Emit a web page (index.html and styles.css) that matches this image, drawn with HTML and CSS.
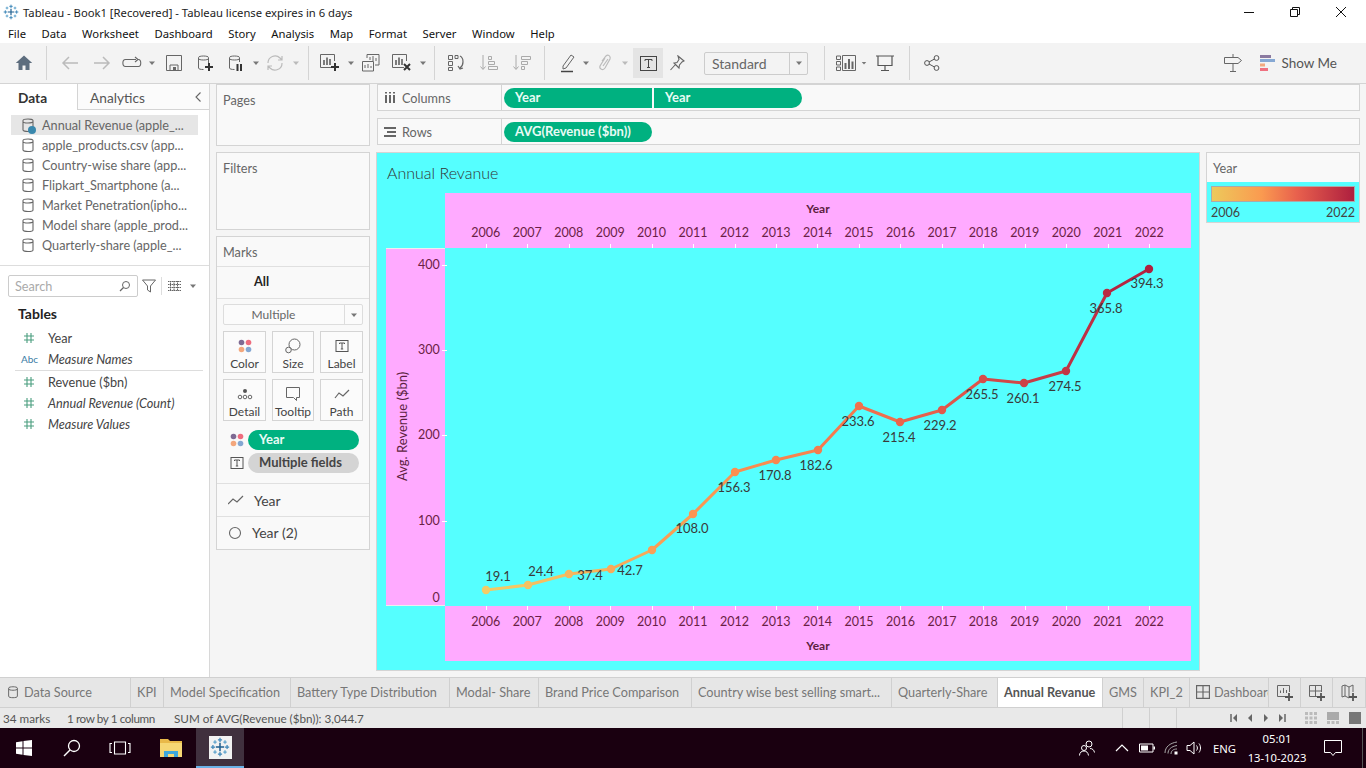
FILE: index.html
```html
<!DOCTYPE html>
<html lang="en">
  <head>
    <meta charset="UTF-8" />
    <title>Tableau - Book1 [Recovered] - Tableau license expires in 6 days</title>
    <link rel="stylesheet" href="styles.css">
  </head>
  <body>
    <!-- Shared icons -->
    <svg class="defs" width="0" height="0">
      <symbol id="i-logo" viewBox="0 0 24 24">
        <g fill="none" stroke-width="1.500">
          <path d="M12 7v10M7 12h10" stroke="#1f5f8f" stroke-width="1.800"/>
          <path d="M12 1v5M9.500 3.500h5M12 18v5M9.500 20.500h5M1 12h5M3.500 9.500v5M18 12h5M20.500 9.500v5" stroke="#3f87b8"/>
          <path d="M6 4v4M4 6h4M18 4v4M16 6h4M6 16v4M4 18h4M18 16v4M16 18h4" stroke="#5fa3cc"/>
        </g>
      </symbol>
      <symbol id="i-cyl" viewBox="0 0 16 16">
        <path d="M3 3.500C3 1.500 13 1.500 13 3.500V13C13 15 3 15 3 13ZM3 4.500C3 6.500 13 6.500 13 4.500" fill="none" stroke="#666" stroke-width="1.100"/>
      </symbol>
      <symbol id="i-hash" viewBox="0 0 12 12">
        <path d="M4 1v10M8 1v10M1 4h10M1 8h10" stroke="#4a9d7f" stroke-width="1.100"/>
      </symbol>
      <symbol id="i-dots" viewBox="0 0 14 14">
        <circle cx="3.500" cy="3.500" r="2.800" fill="#7f6a93"/>
        <circle cx="10.500" cy="3.500" r="2.800" fill="#ee6c7e"/>
        <circle cx="3.500" cy="10.500" r="2.800" fill="#f3a77d"/>
        <circle cx="10.500" cy="10.500" r="2.800" fill="#84a7d2"/>
      </symbol>
      <symbol id="i-tbox" viewBox="0 0 14 14">
        <rect x="1" y="1.500" width="12" height="11" fill="none" stroke="#555"/>
        <path d="M4.500 5V4h5v1M7 4v6M5.800 10h2.400" fill="none" stroke="#555"/>
      </symbol>
      <symbol id="i-caret" viewBox="0 0 8 8">
        <path d="M1 2.500h6L4 6Z" fill="#777"/>
      </symbol>
    </svg>

    <header class="titlebar">
      <svg class="app-logo"><use href="#i-logo"/></svg>
      <span class="app-title">Tableau - Book1 [Recovered] - Tableau license expires in 6 days</span>
      <div class="win-btns">
        <svg viewBox="0 0 12 12"><path d="M1 6.500h10" stroke="#111"/></svg>
        <svg viewBox="0 0 12 12"><path d="M1.500 3.500h7v7h-7zM3.500 3.500v-2h7v7h-2" fill="none" stroke="#111"/></svg>
        <svg viewBox="0 0 12 12"><path d="M1 1l10 10M11 1L1 11" stroke="#111"/></svg>
      </div>
    </header>

    <nav class="menubar">
      <span>File</span><span>Data</span><span>Worksheet</span><span>Dashboard</span><span>Story</span><span>Analysis</span><span>Map</span><span>Format</span><span>Server</span><span>Window</span><span>Help</span>
    </nav>

    <div class="toolbar">
      <div class="tool w32"><svg viewBox="0 0 18 18" width="18" height="18"><path d="M9 1.500L0.800 9H3.500v7h4v-4.500h3V16h4V9h2.700Z" fill="#5d6d7e"/></svg></div>
      <i class="sep m67"></i>
      <div class="tool w32"><svg viewBox="0 0 18 18" width="18" height="18"><path d="M17 9H2M8 3L2 9l6 6" fill="none" stroke="#bbb" stroke-width="1.500"/></svg></div>
      <div class="tool w32"><svg viewBox="0 0 18 18" width="18" height="18"><path d="M1 9h15M10 3l6 6-6 6" fill="none" stroke="#bbb" stroke-width="1.500"/></svg></div>
      <div class="tool w27"><svg viewBox="0 0 20 14" width="20" height="14"><path d="M14 3.500H3.500C0 3.500 0 10.500 3.500 10.500h13c3 0 3-7 0-7M13 1l3 2.500-3 2.500" fill="none" stroke="#666" stroke-width="1.100"/></svg></div>
      <div class="tool w14"><svg class="caret"><use href="#i-caret"/></svg></div>
      <div class="tool w30"><svg viewBox="0 0 16 16" width="16" height="16"><path d="M.5.500h15v15H.500ZM4 15.500V10h8v5.500" fill="none" stroke="#666"/><rect x="7" y="12" width="3" height="3" fill="#666"/></svg></div>
      <div class="tool w32"><svg viewBox="0 0 16 18" width="16" height="18"><path d="M1.500 3.500C1.500 1.500 11.500 1.500 11.500 3.500V9M1.500 3.500V14c0 1 2 1.500 5 1.500M1.500 4.500c0 2 10 2 10 0" fill="none" stroke="#666"/><path d="M12 9v8M8 13h8" stroke="#333" stroke-width="2"/></svg></div>
      <div class="tool w30"><svg viewBox="0 0 16 18" width="16" height="18"><path d="M1.500 3.500C1.500 1.500 11.500 1.500 11.500 3.500V8M1.500 3.500V14c0 1 2 1.500 5 1.500M1.500 4.500c0 2 10 2 10 0" fill="none" stroke="#666"/><path d="M9.500 10v7M13 10v7" stroke="#333" stroke-width="2"/></svg></div>
      <div class="tool w10"><svg class="caret"><use href="#i-caret"/></svg></div>
      <div class="tool w28"><svg viewBox="0 0 18 18" width="18" height="18"><path d="M2 9a7 7 0 0 1 12-5l2 2M16 9a7 7 0 0 1-12 5l-2-2M16 2v4h-4M2 16v-4h4" fill="none" stroke="#bbb" stroke-width="1.200"/></svg></div>
      <div class="tool w14"><svg class="caret faint"><use href="#i-caret"/></svg></div>
      <i class="sep m5"></i>
      <div class="tool w32"><svg viewBox="0 0 20 18" width="20" height="18"><path d="M13 13.500H.500V.500h14V7" fill="none" stroke="#666"/><path d="M4 6v5M7 3.500V11M10 5v6" stroke="#555" stroke-width="1.500"/><path d="M15 9v8M11 13h8" stroke="#333" stroke-width="2"/></svg></div>
      <div class="tool w10"><svg class="caret"><use href="#i-caret"/></svg></div>
      <div class="tool w30"><svg viewBox="0 0 18 18" width="18" height="18"><path d="M5 4V.500h12V11h-4M.500 7.500h11V17H.500Z" fill="#f3f3f3" stroke="#666"/><path d="M8 6V3M11 7V2M14 7V4M3 14v-3M6 14v-4M9 14v-2" stroke="#666"/></svg></div>
      <div class="tool w32"><svg viewBox="0 0 20 18" width="20" height="18"><path d="M12 13.500H.500V.500h14V7" fill="none" stroke="#666"/><path d="M4 6v5M7 3.500V11M10 5v6" stroke="#555" stroke-width="1.500"/><path d="M12 10l6 6M18 10l-6 6" stroke="#333" stroke-width="2"/></svg></div>
      <div class="tool w10"><svg class="caret"><use href="#i-caret"/></svg></div>
      <i class="sep m6"></i>
      <div class="tool w30"><svg viewBox="0 0 18 18" width="18" height="18"><path d="M1.500 1.500h4v4h-4ZM1.500 7.500h4v4h-4ZM1.500 13.500h4v3h-4ZM8 1.500h3v3H8Z" fill="none" stroke="#666"/><path d="M13 2c4 2 4 9 0 12M11 12l2 3 3-1" fill="none" stroke="#666" stroke-width="1.200"/></svg></div>
      <div class="tool w36"><svg viewBox="0 0 18 18" width="18" height="18"><path d="M3 1v14M.500 12.500L3 15.500l2.500-3" fill="none" stroke="#aaa"/><path d="M8.500 2.500h3v3h-3ZM8.500 7.500h6v3h-6ZM8.500 12.500h9v3h-9Z" fill="none" stroke="#aaa"/></svg></div>
      <div class="tool w30"><svg viewBox="0 0 18 18" width="18" height="18"><path d="M3 1v14M.500 12.500L3 15.500l2.500-3" fill="none" stroke="#aaa"/><path d="M8.500 2.500h9v3h-9ZM8.500 7.500h6v3h-6ZM8.500 12.500h3v3h-3Z" fill="none" stroke="#aaa"/></svg></div>
      <i class="sep m7"></i>
      <div class="tool w28 ml2"><svg viewBox="0 0 16 20" width="16" height="20"><path d="M3 13L11 2l3 2-8 11-3 1Z" fill="none" stroke="#666"/><path d="M1 18.500h12" stroke="#444" stroke-width="1.500"/></svg></div>
      <div class="tool w8"><svg class="caret"><use href="#i-caret"/></svg></div>
      <div class="tool w30"><svg viewBox="0 0 14 20" width="14" height="20"><path d="M4 8l4-5c2-2 5 0 4 3L7 15c-2 3-6 1-5-2l5-8M5 13l5-7" fill="none" stroke="#bbb" stroke-width="1.200"/></svg></div>
      <div class="tool w10"><svg class="caret faint"><use href="#i-caret"/></svg></div>
      <div class="tool w30 tool-on"><svg width="17" height="15" viewBox="0 0 17 15"><rect x=".5" y=".5" width="16" height="14" fill="none" stroke="#444"/><path d="M5 5V3.500h7V5M8.500 3.500v8M7 11.500h3" fill="none" stroke="#444"/></svg></div>
      <div class="tool w28"><svg viewBox="0 0 16 16" width="16" height="16"><path d="M9 1l6 5-2 1-2.500 3-.5 3-5-5 3-.500 2-3ZM6 10l-4.500 5" fill="none" stroke="#666" stroke-width="1.100"/></svg></div>
      <div class="fit-select"><span>Standard</span><b><svg class="caret"><use href="#i-caret"/></svg></b></div>
      <i class="sep m16"></i>
      <div class="tool w30"><svg viewBox="0 0 20 16" width="20" height="16"><path d="M.500 1h4v3.500h-4ZM.500 6.500h4V10h-4ZM.500 12h4v3.500h-4ZM6.500.500h13v15h-13Z" fill="none" stroke="#666"/><path d="M9.500 8v6M13 4v10M16.500 6.500V14" stroke="#666" stroke-width="2"/></svg></div>
      <div class="tool w6"><svg class="caret"><use href="#i-caret"/></svg></div>
      <div class="tool w36"><svg viewBox="0 0 18 18" width="18" height="18"><path d="M0 2h18M2 2.500v9h14v-9M9 11.500v5M5 16.500h8" fill="none" stroke="#555" stroke-width="1.200"/></svg></div>
      <i class="sep m6"></i>
      <div class="tool w32"><svg viewBox="0 0 16 16" width="16" height="16"><circle cx="3" cy="8" r="2.400" fill="none" stroke="#555"/><circle cx="12.500" cy="3" r="2.400" fill="none" stroke="#555"/><circle cx="12.500" cy="13" r="2.400" fill="none" stroke="#555"/><path d="M5 7l5.500-3M5 9l5.500 3" stroke="#555"/></svg></div>
      <div class="tb-space"></div>
      <div class="tool w32"><svg viewBox="0 0 18 18" width="18" height="18"><path d="M9 0v3M.500 3.500H14l3.500 3-3.500 3H.500ZM9 9.500V17M6 17.500h6" fill="none" stroke="#666"/></svg></div>
      <div class="showme">
        <svg viewBox="0 0 15 16" width="15" height="16"><rect y="0" width="11" height="3" fill="#8b7aa0"/><rect y="4" width="15" height="3" fill="#86a8d3"/><rect y="8.500" width="5" height="3" fill="#f2a97f"/><rect y="13" width="8" height="3" fill="#ef7180"/></svg>
        <span>Show Me</span>
      </div>
    </div>

    <main class="workspace">
      <aside class="side">
        <div class="side-tabs">
          <div class="side-tab side-tab-on">Data</div>
          <div class="side-tab">Analytics<svg viewBox="0 0 8 12" width="8" height="12"><path d="M6.500 1.500L2 6l4.500 4.500" fill="none" stroke="#666" stroke-width="1.100"/></svg></div>
        </div>
        <ul class="sources">
          <li class="source source-on"><svg><use href="#i-cyl"/></svg><span class="check"></span>Annual Revenue (apple_...</li>
          <li class="source"><svg><use href="#i-cyl"/></svg>apple_products.csv (app...</li>
          <li class="source"><svg><use href="#i-cyl"/></svg>Country-wise share (app...</li>
          <li class="source"><svg><use href="#i-cyl"/></svg>Flipkart_Smartphone (a...</li>
          <li class="source"><svg><use href="#i-cyl"/></svg>Market Penetration(ipho...</li>
          <li class="source"><svg><use href="#i-cyl"/></svg>Model share (apple_prod...</li>
          <li class="source"><svg><use href="#i-cyl"/></svg>Quarterly-share (apple_...</li>
        </ul>
        <div class="field-tools">
          <div class="search">Search<svg viewBox="0 0 12 12" width="12" height="12"><circle cx="7" cy="5" r="3.500" fill="none" stroke="#666"/><path d="M4.500 7.500L1 11" stroke="#666" stroke-width="1.200"/></svg></div>
          <svg class="funnel" viewBox="0 0 14 14" width="14" height="14"><path d="M.500 1h13L8.500 7v6l-3-2V7Z" fill="none" stroke="#666"/></svg>
          <i class="tool-sep"></i>
          <svg viewBox="0 0 13 10" width="13" height="10"><path d="M0 .500h13M0 3.500h13M0 6.500h13M0 9.500h13M2.500 0v10M6 0v10M9.500 0v10" stroke="#666" stroke-dasharray="1.500 .5"/></svg>
          <svg class="caret list-caret"><use href="#i-caret"/></svg>
        </div>
        <h2 class="tables">Tables</h2>
        <ul class="fields">
          <li class="field"><svg class="hash"><use href="#i-hash"/></svg>Year</li>
          <li class="field field-calc"><span class="abc">Abc</span>Measure Names</li>
        </ul>
        <ul class="fields fields-measures">
          <li class="field"><svg class="hash"><use href="#i-hash"/></svg>Revenue ($bn)</li>
          <li class="field field-calc"><svg class="hash"><use href="#i-hash"/></svg>Annual Revenue (Count)</li>
          <li class="field field-calc"><svg class="hash"><use href="#i-hash"/></svg>Measure Values</li>
        </ul>
      </aside>

      <section class="cards">
        <div class="card card-pages"><div class="card-title">Pages</div></div>
        <div class="card card-filters"><div class="card-title">Filters</div></div>
        <div class="card card-marks">
          <div class="card-title marks-title">Marks</div>
          <div class="marks-all">All</div>
          <div class="marks-body">
            <div class="mark-select"><span>Multiple</span><b><svg class="caret"><use href="#i-caret"/></svg></b></div>
            <div class="mark-grid">
              <div class="mark-btn"><svg viewBox="0 0 14 14" width="14" height="14"><use href="#i-dots"/></svg>Color</div>
              <div class="mark-btn"><svg viewBox="0 0 16 16" width="16" height="16"><circle cx="9.500" cy="6.500" r="5.500" fill="none" stroke="#666"/><circle cx="3.500" cy="12" r="2.800" fill="#f6f6f6" stroke="#666"/></svg>Size</div>
              <div class="mark-btn"><svg viewBox="0 0 14 14" width="14" height="14"><use href="#i-tbox"/></svg>Label</div>
              <div class="mark-btn"><svg viewBox="0 0 16 16" width="16" height="16"><circle cx="8" cy="5" r="2" fill="#555"/><circle cx="3" cy="11" r="1.800" fill="none" stroke="#666"/><circle cx="8" cy="11" r="1.800" fill="none" stroke="#666"/><circle cx="13" cy="11" r="1.800" fill="none" stroke="#666"/></svg>Detail</div>
              <div class="mark-btn"><svg viewBox="0 0 16 16" width="16" height="16"><path d="M1.500 1.500h13v10h-3v3l-3-3h-7Z" fill="none" stroke="#666"/></svg>Tooltip</div>
              <div class="mark-btn"><svg viewBox="0 0 16 16" width="16" height="16"><path d="M1 12l4-5 4 3 6-6" fill="none" stroke="#666" stroke-width="1.200"/></svg>Path</div>
            </div>
            <div class="mark-pill"><svg viewBox="0 0 14 14" width="14" height="14"><use href="#i-dots"/></svg><span class="pill pill-green">Year</span></div>
            <div class="mark-pill"><svg viewBox="0 0 14 14" width="14" height="14"><use href="#i-tbox"/></svg><span class="pill pill-grey">Multiple fields</span></div>
          </div>
          <div class="mark-row"><svg viewBox="0 0 16 12" width="16" height="12"><path d="M0 10l5-5 4 3 6-6" fill="none" stroke="#666" stroke-width="1.200"/></svg>Year</div>
          <div class="mark-row"><svg viewBox="0 0 14 14" width="14" height="14"><circle cx="7" cy="7" r="5.500" fill="none" stroke="#666" stroke-width="1.100"/></svg>Year (2)</div>
        </div>
      </section>

      <section class="stage">
        <div class="shelf">
          <div class="shelf-label"><svg viewBox="0 0 12 12" width="12" height="12"><path d="M2 3v8M6 3v8M10 3v8M2 0v1.500M6 0v1.500M10 0v1.500" stroke="#666" stroke-width="2"/></svg>Columns</div>
          <div class="shelf-pills"><span class="pill pill-green pill-first">Year</span><span class="pill pill-green pill-last">Year</span></div>
        </div>
        <div class="shelf">
          <div class="shelf-label"><svg viewBox="0 0 12 12" width="12" height="12"><path d="M0 2h12M3 6h9M0 10h12" stroke="#666" stroke-width="2"/></svg>Rows</div>
          <div class="shelf-pills"><span class="pill pill-green pill-avg">AVG(Revenue ($bn))</span></div>
        </div>

        <div class="view">
          <div class="viz">
            <div class="viz-title">Annual Revanue</div>
            <div class="viz-grid">
              <div></div>
              <div class="xhead xhead-top">
                <div class="xtitle">Year</div>
                <div class="years years-top">
                  <span>2006</span><span>2007</span><span>2008</span><span>2009</span><span>2010</span><span>2011</span><span>2012</span><span>2013</span><span>2014</span><span>2015</span><span>2016</span><span>2017</span><span>2018</span><span>2019</span><span>2020</span><span>2021</span><span>2022</span>
                </div>
              </div>
              <div class="yaxis">
                <div class="ytitle">Avg. Revenue ($bn)</div>
                <div class="yticks">
                  <span class="ytick">400</span>
                  <span class="ytick">300</span>
                  <span class="ytick">200</span>
                  <span class="ytick">100</span>
                  <span class="ytick ytick-zero">0</span>
                </div>
              </div>
              <div class="plot">
                <svg viewBox="445 248 746 358" width="746" height="358">
                  <g stroke-width="3" stroke-linecap="round">
                    <line x1="486" y1="590" x2="528" y2="585" stroke="#f4c864"/>
                    <line x1="528" y1="585" x2="569" y2="574" stroke="#f5bf61"/>
                    <line x1="569" y1="574" x2="611" y2="569" stroke="#f6b45d"/>
                    <line x1="611" y1="569" x2="652" y2="550" stroke="#f8a958"/>
                    <line x1="652" y1="550" x2="693" y2="514" stroke="#f99e55"/>
                    <line x1="693" y1="514" x2="735" y2="472" stroke="#fa9552"/>
                    <line x1="735" y1="472" x2="776" y2="460" stroke="#f98c50"/>
                    <line x1="776" y1="460" x2="818" y2="450" stroke="#f7834f"/>
                    <line x1="818" y1="450" x2="859" y2="406" stroke="#f4794e"/>
                    <line x1="859" y1="406" x2="900" y2="422" stroke="#ee6e4d"/>
                    <line x1="900" y1="422" x2="942" y2="410" stroke="#e6614c"/>
                    <line x1="942" y1="410" x2="983" y2="379" stroke="#de554a"/>
                    <line x1="983" y1="379" x2="1024" y2="383" stroke="#d24848"/>
                    <line x1="1024" y1="383" x2="1066" y2="371" stroke="#c73c46"/>
                    <line x1="1066" y1="371" x2="1107" y2="293" stroke="#bd3044"/>
                    <line x1="1107" y1="293" x2="1149" y2="269" stroke="#b42541"/>
                  </g>
                  <g>
                    <circle cx="486" cy="590" r="4.200" fill="#f4cc66"/>
                    <circle cx="528" cy="585" r="4.200" fill="#f5c263"/>
                    <circle cx="569" cy="574" r="4.200" fill="#f6b75f"/>
                    <circle cx="611" cy="569" r="4.200" fill="#f8ab5b"/>
                    <circle cx="652" cy="550" r="4.200" fill="#f9a056"/>
                    <circle cx="693" cy="514" r="4.200" fill="#fa9553"/>
                    <circle cx="735" cy="472" r="4.200" fill="#fa8f50"/>
                    <circle cx="776" cy="460" r="4.200" fill="#f8864f"/>
                    <circle cx="818" cy="450" r="4.200" fill="#f57c4e"/>
                    <circle cx="859" cy="406" r="4.200" fill="#f0704d"/>
                    <circle cx="900" cy="422" r="4.200" fill="#ea644c"/>
                    <circle cx="942" cy="410" r="4.200" fill="#e2584b"/>
                    <circle cx="983" cy="379" r="4.200" fill="#d84c49"/>
                    <circle cx="1024" cy="383" r="4.200" fill="#cc4047"/>
                    <circle cx="1066" cy="371" r="4.200" fill="#c23545"/>
                    <circle cx="1107" cy="293" r="4.200" fill="#b92a42"/>
                    <circle cx="1149" cy="269" r="4.200" fill="#b01f3f"/>
                  </g>
                  <g class="labels">
                    <text x="498" y="576">19.1</text>
                    <text x="541" y="571">24.4</text>
                    <text x="590" y="575">37.4</text>
                    <text x="630" y="570">42.7</text>
                    <text x="692" y="528">108.0</text>
                    <text x="734" y="487">156.3</text>
                    <text x="775" y="475">170.8</text>
                    <text x="816" y="465">182.6</text>
                    <text x="858" y="421">233.6</text>
                    <text x="899" y="437">215.4</text>
                    <text x="940" y="425">229.2</text>
                    <text x="982" y="394">265.5</text>
                    <text x="1023" y="398">260.1</text>
                    <text x="1065" y="386">274.5</text>
                    <text x="1106" y="308">365.8</text>
                    <text x="1147" y="283">394.3</text>
                  </g>
                </svg>
              </div>
              <div></div>
              <div class="xhead xhead-bottom">
                <div class="years years-bottom">
                  <span>2006</span><span>2007</span><span>2008</span><span>2009</span><span>2010</span><span>2011</span><span>2012</span><span>2013</span><span>2014</span><span>2015</span><span>2016</span><span>2017</span><span>2018</span><span>2019</span><span>2020</span><span>2021</span><span>2022</span>
                </div>
                <div class="xtitle">Year</div>
              </div>
            </div>
          </div>
          <div class="legend">
            <div class="legend-title">Year</div>
            <div class="legend-body">
              <div class="legend-ramp"></div>
              <div class="legend-ends"><span>2006</span><span>2022</span></div>
            </div>
          </div>
        </div>
      </section>
    </main>

    <div class="tabs">
      <div class="tab"><svg><use href="#i-cyl"/></svg>Data Source</div>
      <div class="tab">KPI</div>
      <div class="tab">Model Specification</div>
      <div class="tab">Battery Type Distribution</div>
      <div class="tab">Modal- Share</div>
      <div class="tab">Brand Price Comparison</div>
      <div class="tab">Country wise best selling smart...</div>
      <div class="tab">Quarterly-Share</div>
      <div class="tab tab-on">Annual Revanue</div>
      <div class="tab">GMS</div>
      <div class="tab">KPI_2</div>
      <div class="tab tab-cut"><svg viewBox="0 0 12 12" width="12" height="12"><path d="M.5.500h11v11H.500ZM6 .5v11M.5 6h11" fill="none" stroke="#666"/></svg>Dashboard</div>
      <div class="tab tab-add"><svg viewBox="0 0 18 18" width="18" height="18"><path d="M10 12.500H1.500v-11h12V8M4.500 9V6.500M7.500 9V4M10.500 9V6" fill="none" stroke="#666"/><path d="M13 9v8M9 13h8" stroke="#555" stroke-width="1.800"/></svg></div>
      <div class="tab tab-add"><svg viewBox="0 0 18 18" width="18" height="18"><path d="M10 12.500H1.500v-11h12V8M7.500 1.500v11M1.500 7h12" fill="none" stroke="#666"/><path d="M13 9v8M9 13h8" stroke="#555" stroke-width="1.800"/></svg></div>
      <div class="tab tab-add"><svg viewBox="0 0 18 18" width="18" height="18"><path d="M9 14l-4-2-3 1V2l3-1 4 2 4-2v7M5 1v11M9 3v11" fill="none" stroke="#666"/><path d="M13 9v8M9 13h8" stroke="#555" stroke-width="1.800"/></svg></div>
    </div>

    <div class="statusbar">
      <span class="st-marks">34 marks</span>
      <span class="st-size">1 row by 1 column</span>
      <span>SUM of AVG(Revenue ($bn)): 3,044.7</span>
      <div class="st-cells"><i></i><i></i><i></i></div>
      <div class="st-nav">
        <svg viewBox="0 0 8 10" width="8" height="10"><path d="M1 1v8" stroke="#666" stroke-width="1.500"/><path d="M7 1v8L3 5Z" fill="#666"/></svg>
        <svg viewBox="0 0 8 10" width="8" height="10"><path d="M6 1v8L2 5Z" fill="#666"/></svg>
        <svg viewBox="0 0 8 10" width="8" height="10"><path d="M2 1v8l4-4Z" fill="#666"/></svg>
        <svg viewBox="0 0 8 10" width="8" height="10"><path d="M7 1v8" stroke="#666" stroke-width="1.500"/><path d="M1 1v8l4-4Z" fill="#666"/></svg>
      </div>
      <div class="st-views">
        <svg viewBox="0 0 12 12" width="12" height="12"><path d="M0 1.500h12M0 6h12M0 10.500h12" stroke="#bbb" stroke-width="3" stroke-dasharray="3 1.500"/></svg>
        <svg viewBox="0 0 12 12" width="12" height="12"><path d="M0 4h12" stroke="#aaa" stroke-width="8"/><path d="M0 10.500h12" stroke="#bbb" stroke-width="3" stroke-dasharray="3 1.500"/></svg>
        <svg viewBox="0 0 12 12" width="12" height="12"><rect width="12" height="12" fill="#777"/></svg>
      </div>
    </div>

    <footer class="taskbar">
      <div class="task"><svg viewBox="0 0 16 16" width="16" height="16"><path d="M0 2.300l6.500-1v6.200H0ZM7.500 1.100L16 0v7.500H7.500ZM0 8.500h6.500v6.200l-6.500-1ZM7.500 8.500H16V16l-8.500-1.100Z" fill="#fff"/></svg></div>
      <div class="task"><svg viewBox="0 0 18 18" width="18" height="18"><circle cx="11" cy="7" r="5.500" fill="none" stroke="#fff" stroke-width="1.300"/><path d="M7 11l-6 6" stroke="#fff" stroke-width="1.500"/></svg></div>
      <div class="task"><svg viewBox="0 0 22 14" width="22" height="14"><path d="M5.500 1h11v12h-11ZM3 2.500H1v9h2M19 2.500h2v9h-2" fill="none" stroke="#fff" stroke-width="1.100"/></svg></div>
      <div class="task task-folder"><svg viewBox="0 0 22 18" width="22" height="18"><path d="M0 0h8l2 2h12v3H0Z" fill="#e9b949"/><rect y="4" width="22" height="14" fill="#f6d774"/><rect x="4" y="12" width="14" height="6" fill="#3fa7dc"/><rect x="8" y="15" width="6" height="3" fill="#f6d774"/></svg></div>
      <div class="task task-on"><span class="task-tile"><svg viewBox="0 0 24 24" width="20" height="20"><use href="#i-logo"/></svg></span></div>
      <div class="tray">
        <svg viewBox="0 0 18 18" width="18" height="18"><circle cx="11" cy="5" r="3" fill="none" stroke="#fff"/><circle cx="6" cy="9" r="2.500" fill="none" stroke="#fff"/><path d="M1.500 16.500c0-3 2-4.500 4.500-4.500s4 1.500 4.500 4.500M12 9.500c2.500 0 4 1.500 4.500 4" fill="none" stroke="#fff"/></svg>
        <svg class="tray-up" viewBox="0 0 14 8" width="14" height="8"><path d="M1 7l6-6 6 6" fill="none" stroke="#fff" stroke-width="1.200"/></svg>
        <svg class="tray-batt" viewBox="0 0 16 10" width="16" height="10"><path d="M.5 1h13.500v8H.500Z" fill="none" stroke="#fff"/><rect x="2" y="2.500" width="7" height="5" fill="#fff"/><rect x="14.500" y="3.500" width="1.500" height="3" fill="#fff"/></svg>
        <svg class="tray-wifi" viewBox="0 0 14 14" width="14" height="14"><path d="M1 12C1 6 6 2 13 1M4 12.500c0-4 3-7 9-8M7 13c0-3 2-5 6-5" fill="none" stroke="#aaa"/><rect x="10.500" y="10.500" width="3" height="3" fill="#fff"/></svg>
        <svg class="tray-vol" viewBox="0 0 17 14" width="17" height="14"><path d="M1 4.500h3L8 1v12L4 9.500H1Z" fill="none" stroke="#fff"/><path d="M10.500 4.500c1.200 1.500 1.200 3.500 0 5M13 2.500c2 2.500 2 6.500 0 9" fill="none" stroke="#fff"/></svg>
        <span class="tray-lang">ENG</span>
        <div class="clock"><span>05:01</span><span>13-10-2023</span></div>
        <svg class="tray-note" viewBox="0 0 18 16" width="18" height="16"><path d="M.5.500h17v12h-6l-2.500 3-2.500-3h-6Z" fill="none" stroke="#fff"/></svg>
      </div>
    </footer>
  </body>
</html>
```

FILE: styles.css
```css
/* Reset */
* {
  box-sizing: border-box;
  margin: 0;
  padding: 0;
}
:root {
  --ui-font: "Lato", "Open Sans", sans-serif;
  --win-font: "Noto Sans", "Open Sans", sans-serif;
  --line: #d4d4d4;
  --panel: #f9f9f9;
  --green: #00b180;
  --cyan: #55ffff;
  --pink: #ffaaff;
}
body {
  width: 1366px;
  height: 768px;
  overflow: hidden;
  display: flex;
  flex-direction: column;
  background: #f5f5f5;
  font-family: var(--ui-font);
  font-size: 12.7px;
  color: #555;
}
ul {
  list-style: none;
}
.defs {
  position: absolute;
}
.caret {
  width: 8px;
  height: 8px;
}
.caret.faint {
  opacity: 0.45;
}

/* Title & menu */
.titlebar {
  height: 24px;
  flex: none;
  display: flex;
  align-items: center;
  background: #fff;
  font-family: var(--win-font);
  font-size: 11.25px;
  color: #222;
}
.app-logo {
  width: 16px;
  height: 16px;
  margin: 0 4px 0 3px;
}
.app-title {
  flex: 1;
}
.win-btns {
  display: flex;
  gap: 34px;
  margin-right: 19px;
}
.win-btns svg {
  width: 12px;
  height: 12px;
}
.menubar {
  height: 19px;
  flex: none;
  display: flex;
  align-items: center;
  gap: 15.6px;
  padding-left: 8px;
  background: #fff;
  font-family: var(--win-font);
  font-size: 11.25px;
  color: #111;
}

/* Toolbar */
.toolbar {
  height: 41px;
  flex: none;
  display: flex;
  align-items: center;
  padding-left: 8px;
  background: #f3f3f3;
  border-bottom: 1px solid var(--line);
}
.tool {
  height: 30px;
  flex: none;
  display: flex;
  align-items: center;
  justify-content: center;
}
.tool-on {
  background: #e4e4e4;
  margin-left: 3px;
}
.w6 { width: 6px; }
.w8 { width: 8px; }
.w10 { width: 10px; }
.w14 { width: 14px; }
.w27 { width: 27px; }
.w28 { width: 28px; }
.w30 { width: 30px; }
.w32 { width: 32px; }
.w36 { width: 36px; }
.ml2 { margin-left: 2px; }
.sep {
  width: 1px;
  height: 34px;
  flex: none;
  background: #d4d4d4;
}
.m5 { margin: 0 5px; }
.m6 { margin: 0 6px; }
.m67 { margin: 0 7px 0 6px; }
.m7 { margin: 0 7px; }
.m16 { margin: 0 6px 0 16px; }
.fit-select {
  width: 104px;
  height: 23px;
  flex: none;
  margin-left: 13px;
  display: flex;
  align-items: center;
  border: 1px solid #ccc;
  border-radius: 2px;
  font-size: 14px;
  color: #666;
}
.fit-select span {
  flex: 1;
  padding-left: 7px;
}
.fit-select b {
  width: 18px;
  height: 21px;
  display: flex;
  align-items: center;
  justify-content: center;
  border-left: 1px solid #ccc;
}
.tb-space {
  flex: 1;
}
.showme {
  display: flex;
  align-items: center;
  gap: 6px;
  margin: 0 29px 0 11px;
  font-size: 13.5px;
  color: #555;
}

/* Main area */
.workspace {
  height: 593px;
  flex: none;
  display: flex;
}
.side {
  width: 210px;
  flex: none;
  background: #fff;
  border-right: 1px solid #d8d8d8;
}
.side-tabs {
  height: 26px;
  display: flex;
}
.side-tab {
  width: 77px;
  padding: 5px 0 0 18px;
  font-size: 13.7px;
  font-weight: 700;
  color: #333;
}
.side-tab:last-child {
  flex: 1;
  display: flex;
  justify-content: space-between;
  padding: 5px 7px 0 12px;
  font-weight: 400;
  color: #555;
  background: #fbfbfb;
  border-left: 1px solid var(--line);
  border-bottom: 1px solid var(--line);
}
.side-tab svg {
  margin-top: 2px;
}
.sources {
  height: 156px;
  padding-top: 5px;
  border-bottom: 1px solid #ddd;
}
.source {
  position: relative;
  height: 20px;
  margin: 0 11px;
  padding-left: 31px;
  line-height: 20px;
  color: #666;
  white-space: nowrap;
}
.source svg {
  position: absolute;
  left: 9px;
  top: 2px;
  width: 16px;
  height: 16px;
}
.source-on {
  background: #e6e6e6;
}
.check {
  position: absolute;
  left: 17px;
  top: 11px;
  width: 8px;
  height: 8px;
  border-radius: 50%;
  background: #3a88ad;
}
.field-tools {
  display: flex;
  align-items: center;
  height: 22px;
  margin: 9px 0 0 8px;
}
.search {
  width: 130px;
  height: 22px;
  display: flex;
  align-items: center;
  justify-content: space-between;
  padding: 0 6px 0 6px;
  border: 1px solid #ccc;
  border-radius: 2px;
  color: #aaa;
}
.funnel {
  margin: 0 5px 0 4px;
}
.tool-sep {
  width: 1px;
  height: 18px;
  margin-right: 6px;
  background: #ddd;
}
.list-caret {
  margin-left: 8px;
}
.tables {
  margin: 9px 0 0 18px;
  font-size: 14px;
  line-height: 16px;
  color: #222;
}
.fields {
  margin: 5px 6px 0 15px;
  padding-bottom: 1px;
  border-bottom: 1px solid #ddd;
}
.fields-measures {
  margin-top: 0;
  border-bottom: none;
}
.field {
  height: 21px;
  display: flex;
  align-items: center;
  color: #444;
  white-space: nowrap;
}
.field-calc {
  font-style: italic;
}
.hash {
  width: 12px;
  height: 12px;
  margin: 0 13px 0 8px;
  flex: none;
}
.abc {
  width: 33px;
  padding-left: 6px;
  flex: none;
  font-size: 10px;
  font-style: normal;
  color: #3a7ca5;
}

/* Cards */
.cards {
  width: 154px;
  flex: none;
  margin: 0 7px 0 6px;
  display: flex;
  flex-direction: column;
  gap: 6px;
}
.card {
  background: var(--panel);
  border: 1px solid var(--line);
}
.card-title {
  padding: 7px 0 0 6px;
  color: #666;
}
.card-pages {
  height: 62px;
}
.card-filters {
  height: 78px;
}
.card-marks {
  height: 314px;
}
.marks-title {
  height: 30px;
  border-bottom: 1px solid #e0e0e0;
}
.marks-all {
  height: 32px;
  line-height: 29px;
  padding-left: 37px;
  font-weight: 700;
  color: #222;
  border-bottom: 1px solid #e0e0e0;
}
.marks-body {
  padding: 5px 6px 0;
  height: 185px;
  border-bottom: 1px solid #e0e0e0;
}
.mark-select {
  height: 21px;
  display: flex;
  align-items: center;
  background: #fbfbfb;
  border: 1px solid #ddd;
  border-radius: 2px;
  font-size: 12px;
  color: #666;
}
.mark-select span {
  flex: 1;
  padding-right: 21px;
  text-align: center;
}
.mark-select b {
  width: 18px;
  height: 19px;
  display: flex;
  align-items: center;
  justify-content: center;
  border-left: 1px solid #ddd;
}
.mark-grid {
  display: grid;
  grid-template-columns: 43px 42px 43px;
  grid-auto-rows: 42px;
  justify-content: space-between;
  row-gap: 6px;
  margin-top: 6px;
}
.mark-btn {
  display: flex;
  flex-direction: column;
  align-items: center;
  gap: 3px;
  padding-top: 6px;
  background: #fbfbfb;
  border: 1px solid var(--line);
  font-size: 12px;
  line-height: 14px;
  color: #444;
}
.mark-btn svg {
  height: 16px;
}
.mark-pill {
  display: flex;
  align-items: center;
  margin-top: 3px;
  gap: 4px;
}
.mark-grid + .mark-pill {
  margin-top: 9px;
}
.mark-pill svg {
  flex: none;
  margin-left: 7px;
}
.mark-pill .pill {
  flex: none;
  width: 111px;
}
.mark-row {
  height: 32px;
  display: flex;
  align-items: center;
  gap: 10px;
  padding-left: 11px;
  color: #444;
  font-size: 14px;
}
.mark-row + .mark-row {
  border-top: 1px solid #e0e0e0;
}

/* Pills */
.pill {
  height: 20px;
  padding-left: 11px;
  display: block;
  line-height: 19px;
  border-radius: 10px;
  font-size: 13px;
  font-weight: 700;
  white-space: nowrap;
}
.pill-green {
  background: var(--green);
  color: #e9fbf5;
}
.pill-grey {
  background: #d4d4d4;
  color: #444;
}
.pill-first {
  width: 148px;
  border-radius: 10px 0 0 10px;
}
.pill-last {
  width: 148px;
  margin-left: 2px;
  border-radius: 0 10px 10px 0;
}
.pill-avg {
  width: 148px;
}

/* Shelves */
.stage {
  width: 983px;
  flex: none;
  display: flex;
  flex-direction: column;
  gap: 7px;
}
.shelf {
  height: 27px;
  flex: none;
  display: flex;
  background: var(--panel);
  border: 1px solid var(--line);
}
.shelf-label {
  width: 124px;
  display: flex;
  align-items: center;
  gap: 6px;
  padding-left: 6px;
  color: #666;
  border-right: 1px solid var(--line);
}
.shelf-pills {
  display: flex;
  align-items: center;
  padding-left: 2px;
}

/* View */
.view {
  display: flex;
  gap: 6px;
  margin-left: -1px;
}
.viz {
  width: 824px;
  height: 519px;
  padding: 9px 8px 0 9px;
  background: var(--cyan);
  border: 1px solid var(--line);
}
.viz-title {
  height: 31px;
  padding: 1px 0 0 1px;
  font-size: 16px;
  font-weight: 300;
  color: #333;
}
.viz-grid {
  display: grid;
  grid-template-columns: 59px 746px;
  grid-template-rows: 55px 358px 55px;
}
.xhead {
  background: var(--pink);
  color: #6b1f45;
  font-size: 12.5px;
}
.xtitle {
  text-align: center;
  font-weight: 700;
  font-size: 12px;
  color: #5c1f40;
}
.xhead-top .xtitle {
  padding-top: 8px;
  height: 29px;
}
.xhead-bottom .xtitle {
  padding-top: 6px;
}
.years {
  display: flex;
  padding: 0 21px 0 20px;
  height: 26px;
}
.years span {
  position: relative;
  flex: 1;
  text-align: center;
  line-height: 18px;
}
.years span::after {
  content: "";
  position: absolute;
  left: 50%;
  width: 1px;
  height: 4px;
  background: #fff;
}
.years-top span {
  line-height: 22px;
}
.years-top span::after {
  bottom: 0;
}
.years-bottom span {
  padding-top: 7px;
}
.years-bottom span::after {
  top: 0;
}
.yaxis {
  display: flex;
  background: var(--pink);
  border-top: 1px solid #eee;
  border-bottom: 1px solid #eee;
  color: #6b1f45;
  font-size: 12.5px;
}
.ytitle {
  width: 32px;
  writing-mode: vertical-rl;
  transform: rotate(180deg);
  text-align: center;
  line-height: 32px;
  padding-top: 2px;
  font-size: 13px;
  color: #5c1f40;
}
.yticks {
  flex: 1;
  display: flex;
  flex-direction: column;
  align-items: flex-end;
  gap: 69.2px;
  padding: 8px 0 0;
  height: 100%;
}
.ytick {
  position: relative;
  height: 16px;
  line-height: 16px;
  padding-right: 7px;
}
.ytick::after {
  content: "";
  position: absolute;
  right: 0;
  top: 8px;
  width: 5px;
  height: 1px;
  background: #fff;
}
.ytick-zero {
  margin-top: -8px;
}
.ytick-zero::after {
  display: none;
}
.plot {
  background: var(--cyan);
}
.plot svg {
  display: block;
}
.labels text {
  font-family: var(--ui-font);
  font-size: 13px;
  fill: #3a3a3a;
  text-anchor: middle;
  dominant-baseline: central;
}

/* Legend */
.legend {
  width: 154px;
  height: 71px;
  flex: none;
  background: var(--panel);
  border: 1px solid var(--line);
}
.legend-title {
  height: 29px;
  padding: 7px 0 0 6px;
  color: #666;
}
.legend-body {
  height: 40px;
  padding: 4px 4px 0;
  background: var(--cyan);
}
.legend-ramp {
  height: 16px;
  background: linear-gradient(90deg, #edc95b, #fa9a50 35%, #e8604d 60%, #ae1f3f);
  border: 1px solid #aaa;
}
.legend-ends {
  display: flex;
  justify-content: space-between;
  margin-top: 3px;
  font-size: 12.5px;
  color: #444;
}

/* Sheet tabs */
.tabs {
  height: 31px;
  flex: none;
  display: grid;
  grid-template-columns: 131px 33px 127px 159px 89px 153px 200px 106px 105px 41px 46px 79px 32px 32px 33px;
  background: #e6e6e6;
  border-top: 1px solid #d0d0d0;
  border-bottom: 1px solid #d0d0d0;
}
.tab {
  display: flex;
  align-items: center;
  padding: 0 0 2px 6px;
  overflow: hidden;
  white-space: nowrap;
  color: #777;
  border-right: 1px solid #d0d0d0;
}
.tab > svg {
  width: 14px;
  height: 14px;
  flex: none;
  margin-right: 4px;
}
.tab-on {
  background: #fff;
  font-weight: 700;
  color: #555;
}
.tab-add {
  padding: 0 0 0 7px;
}
.tab-add > svg {
  width: 18px;
  height: 18px;
}

/* Status bar */
.statusbar {
  height: 20px;
  flex: none;
  display: flex;
  align-items: center;
  padding-left: 3px;
  background: #e9e9e9;
  font-size: 11.7px;
  color: #555;
  white-space: nowrap;
}
.st-marks {
  width: 64px;
}
.st-size {
  width: 107px;
  letter-spacing: -0.4px;
}
.st-cells {
  display: flex;
  margin-left: auto;
}
.st-cells i {
  width: 27px;
  height: 20px;
  border-left: 1px solid #d0d0d0;
}
.st-nav {
  display: flex;
  gap: 8px;
  margin: 0 19px 0 27px;
}
.st-views {
  display: flex;
  gap: 10px;
  margin-right: 5px;
}

/* Windows taskbar */
.taskbar {
  height: 40px;
  flex: none;
  display: flex;
  background: #1a0010;
}
.task {
  width: 48px;
  flex: none;
  display: flex;
  align-items: center;
  justify-content: center;
}
.task-folder svg {
  margin-left: 5px;
}
.task-on {
  margin-left: 4px;
  background: #40303e;
  border-bottom: 2px solid #6ab1e6;
}
.task-tile {
  width: 23px;
  height: 23px;
  display: flex;
  align-items: center;
  justify-content: center;
  background: #f2f2f2;
}
.tray {
  flex: 1;
  display: flex;
  align-items: center;
  justify-content: flex-end;
  margin-right: 3px;
  border-right: 1px solid #555;
  color: #fff;
  font-family: var(--win-font);
  font-size: 11.25px;
}
.tray-up {
  margin-left: 19px;
}
.tray-batt {
  margin-left: 10px;
}
.tray-wifi {
  margin-left: 9px;
}
.tray-vol {
  margin-left: 8px;
}
.tray-lang {
  margin-left: 10px;
}
.clock {
  width: 80px;
  margin-left: 1px;
  display: flex;
  flex-direction: column;
  align-items: center;
  line-height: 19px;
}
.tray-note {
  margin: 0 20px 0 7px;
}
```
